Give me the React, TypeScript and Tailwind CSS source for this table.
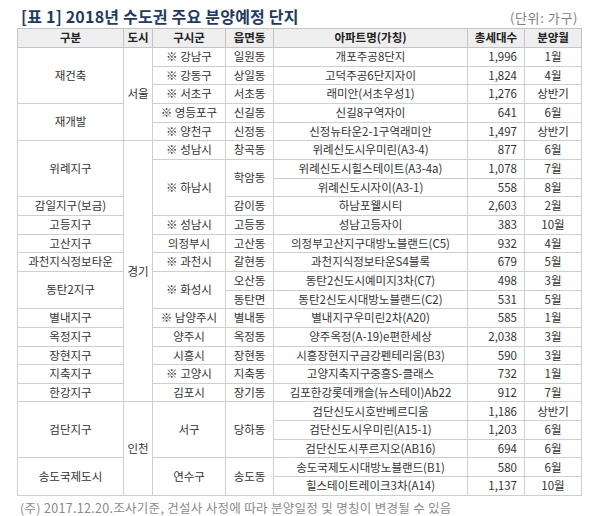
import React from 'react';

type Cell = { t: string; rs?: number; a?: 'l' | 'c' | 'r'; b?: boolean };

const rows: Cell[][] = [
  [{ t: '재건축', rs: 3 }, { t: '서울', rs: 5 }, { t: '※ 강남구' }, { t: '일원동' }, { t: '개포주공8단지' }, { t: '1,996', a: 'r' }, { t: '1월' }],
  [{ t: '※ 강동구' }, { t: '상일동' }, { t: '고덕주공6단지자이' }, { t: '1,824', a: 'r' }, { t: '4월' }],
  [{ t: '※ 서초구' }, { t: '서초동' }, { t: '래미안(서초우성1)' }, { t: '1,276', a: 'r' }, { t: '상반기' }],
  [{ t: '재개발', rs: 2 }, { t: '※ 영등포구' }, { t: '신길동' }, { t: '신길8구역자이' }, { t: '641', a: 'r' }, { t: '6월' }],
  [{ t: '※ 양천구' }, { t: '신정동' }, { t: '신정뉴타운2-1구역래미안' }, { t: '1,497', a: 'r' }, { t: '상반기' }],
  [{ t: '위례지구', rs: 3 }, { t: '경기', rs: 14 }, { t: '※ 성남시' }, { t: '창곡동' }, { t: '위례신도시우미린(A3-4)' }, { t: '877', a: 'r' }, { t: '6월' }],
  [{ t: '※ 하남시', rs: 3 }, { t: '학암동', rs: 2 }, { t: '위례신도시힐스테이트(A3-4a)' }, { t: '1,078', a: 'r' }, { t: '7월' }],
  [{ t: '위례신도시자이(A3-1)' }, { t: '558', a: 'r' }, { t: '8월' }],
  [{ t: '감일지구(보금)' }, { t: '감이동' }, { t: '하남포웰시티' }, { t: '2,603', a: 'r' }, { t: '2월' }],
  [{ t: '고등지구' }, { t: '※ 성남시' }, { t: '고등동' }, { t: '성남고등자이' }, { t: '383', a: 'r' }, { t: '10월' }],
  [{ t: '고산지구' }, { t: '의정부시' }, { t: '고산동' }, { t: '의정부고산지구대방노블랜드(C5)' }, { t: '932', a: 'r' }, { t: '4월' }],
  [{ t: '과천지식정보타운' }, { t: '※ 과천시' }, { t: '갈현동' }, { t: '과천지식정보타운S4블록' }, { t: '679', a: 'r' }, { t: '5월' }],
  [{ t: '동탄2지구', rs: 2 }, { t: '※ 화성시', rs: 2 }, { t: '오산동' }, { t: '동탄2신도시예미지3차(C7)' }, { t: '498', a: 'r' }, { t: '3월' }],
  [{ t: '동탄면' }, { t: '동탄2신도시대방노블랜드(C2)' }, { t: '531', a: 'r' }, { t: '5월' }],
  [{ t: '별내지구' }, { t: '※ 남양주시' }, { t: '별내동' }, { t: '별내지구우미린2차(A20)' }, { t: '585', a: 'r' }, { t: '1월' }],
  [{ t: '옥정지구' }, { t: '양주시' }, { t: '옥정동' }, { t: '양주옥정(A-19)e편한세상' }, { t: '2,038', a: 'r' }, { t: '3월' }],
  [{ t: '장현지구' }, { t: '시흥시' }, { t: '장현동' }, { t: '시흥장현지구금강펜테리움(B3)' }, { t: '590', a: 'r' }, { t: '3월' }],
  [{ t: '지축지구' }, { t: '※ 고양시' }, { t: '지축동' }, { t: '고양지축지구중흥S-클래스' }, { t: '732', a: 'r' }, { t: '1월' }],
  [{ t: '한강지구' }, { t: '김포시' }, { t: '장기동' }, { t: '김포한강롯데캐슬(뉴스테이)Ab22' }, { t: '912', a: 'r' }, { t: '7월' }],
  [{ t: '검단지구', rs: 3 }, { t: '인천', rs: 5 }, { t: '서구', rs: 3 }, { t: '당하동', rs: 3 }, { t: '검단신도시호반베르디움' }, { t: '1,186', a: 'r' }, { t: '상반기' }],
  [{ t: '검단신도시우미린(A15-1)' }, { t: '1,203', a: 'r' }, { t: '6월' }],
  [{ t: '검단신도시푸르지오(AB16)' }, { t: '694', a: 'r' }, { t: '6월' }],
  [{ t: '송도국제도시', rs: 2 }, { t: '연수구', rs: 2 }, { t: '송도동', rs: 2 }, { t: '송도국제도시대방노블랜드(B1)' }, { t: '580', a: 'r' }, { t: '6월' }],
  [{ t: '힐스테이트레이크3차(A14)' }, { t: '1,137', a: 'r' }, { t: '10월' }],
];

const headers = ['구분', '도시', '구시군', '읍면동', '아파트명(가칭)', '총세대수', '분양월'];
const widths = ['w-[106px]', 'w-[29px]', 'w-[73px]', 'w-[48px]', 'w-[194px]', 'w-[57px]', 'w-[57px]'];

export default function App() {
  return (
    <div className="w-[600px] h-[516px] bg-white font-['Noto_Sans_CJK_KR',sans-serif] text-[#333]">
      <div className="flex items-end justify-between pl-[21px] pr-[22px] h-[28px] pb-[4px]">
        <h1 className="text-[16px] font-bold text-[#1f3b63] leading-none tracking-[0.2px]">[표 1] 2018년 수도권 주요 분양예정 단지</h1>
        <span className="text-[13px] text-[#808080] leading-none tracking-[0.6px]">(단위: 가구)</span>
      </div>
      <table className="ml-[17px] w-[564px] table-fixed border-collapse border border-[#bdbdbd] text-[11.5px] leading-none">
        <colgroup>
          {widths.map((w, i) => (
            <col key={i} className={w} />
          ))}
        </colgroup>
        <thead>
          <tr className="h-[19px] bg-[#eeeeee]">
            {headers.map((h) => (
              <th key={h} className="border border-[#c4c4c4] font-bold text-[#222] text-center p-0 whitespace-nowrap">
                {h}
              </th>
            ))}
          </tr>
        </thead>
        <tbody>
          {rows.map((r, i) => (
            <tr key={i} className="h-[18.67px]">
              {r.map((c, j) => (
                <td
                  key={j}
                  rowSpan={c.rs}
                  className={
                    'border border-[#cfcfcf] p-0 whitespace-nowrap align-middle ' +
                    (c.a === 'r' ? 'text-right pr-[7px]' : 'text-center')
                  }
                >
                  {c.t}
                </td>
              ))}
            </tr>
          ))}
        </tbody>
      </table>
      <p className="pl-[20px] pt-[2px] text-[12.5px] text-[#8a8a8a] tracking-[0.3px] leading-[20px]">
        (주) 2017.12.20.조사기준, 건설사 사정에 따라 분양일정 및 명칭이 변경될 수 있음
      </p>
    </div>
  );
}
